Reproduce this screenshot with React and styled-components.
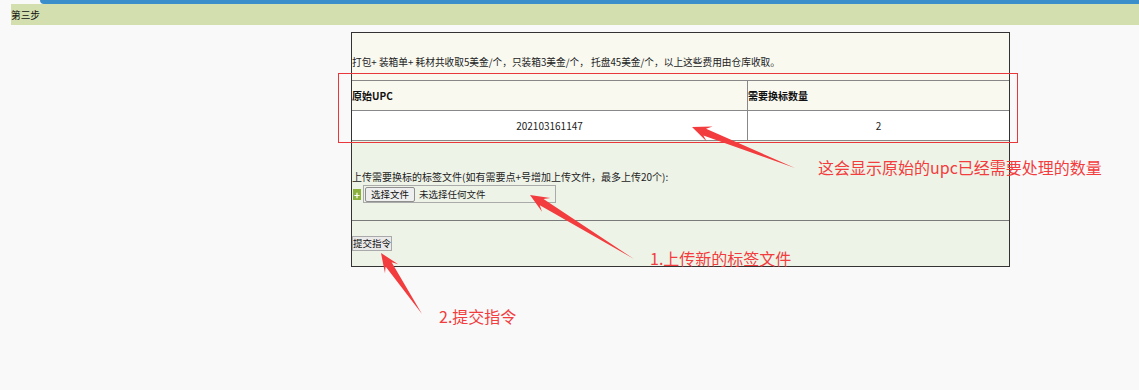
import React from "react";
import styled, { createGlobalStyle } from "styled-components";

const Global = createGlobalStyle`
  html, body { margin: 0; padding: 0; background: #f9f9f9; }
  body {
    font-family: "Noto Sans CJK SC", "Noto Sans", sans-serif;
    font-size: 10px;
    color: #222;
  }
`;

const Page = styled.div`
  position: relative;
  width: 1139px;
  height: 390px;
  overflow: hidden;
  background: #f9f9f9;
`;

const BlueBar = styled.div`
  height: 4px;
  margin-left: 40px;
  background: #3a8fcb;
  border-bottom-left-radius: 5px;
`;

const StepBar = styled.div`
  height: 21px;
  margin-left: 11px;
  background: #d3dfae;
  display: flex;
  align-items: center;
  line-height: 12px;
  font-size: 9.7px;
  color: #111;
`;

const Panel = styled.div`
  margin: 7px 0 0 351px;
  width: 657px;
  border: 1px solid #333;
`;

const InfoSection = styled.div`
  background: #f9f9f0;
  padding-top: 23px;
`;

const Notice = styled.div`
  line-height: 12px;
  height: 12px;
  margin-bottom: 12px;
  font-size: 9.7px;
  white-space: nowrap;
`;

const UpcTable = styled.table`
  width: 100%;
  border-collapse: collapse;
  border-spacing: 0;
`;

const HeadCell = styled.th`
  height: 29px;
  padding: 0;
  text-align: left;
  font-weight: bold;
  border-top: 1px solid #888;
  border-bottom: 1px solid #888;
  border-left: ${(p) => (p.$divider ? "1px solid #888" : "0")};
  width: ${(p) => p.$w};
  color: #111;
`;

const BodyRow = styled.tr`
  background: #fff;
`;

const BodyCell = styled.td`
  height: 29px;
  padding: 0;
  text-align: center;
  border-bottom: 1px solid #888;
  border-left: ${(p) => (p.$divider ? "1px solid #888" : "0")};
  color: #222;
`;

const UploadSection = styled.div`
  background: #eef3e8;
  padding: 30px 0 17px;
  border-bottom: 1px solid #7a7a7a;
`;

const UploadLabel = styled.div`
  line-height: 12px;
  height: 12px;
  white-space: nowrap;
`;

const FileRow = styled.div`
  margin-top: 2px;
  display: flex;
  align-items: center;
  gap: 2px;
`;

const AddButton = styled.span`
  width: 8px;
  height: 11px;
  margin-left: 1px;
  background: #8cb03c;
  color: #fff;
  font-weight: bold;
  font-size: 10px;
  line-height: 11px;
  display: flex;
  align-items: center;
  justify-content: center;
`;

const FileBox = styled.label`
  width: 190px;
  height: 16px;
  border: 1px solid #aaa;
  display: flex;
  align-items: center;
  gap: 4px;
  padding-left: 1px;
`;

const ChooseButton = styled.span`
  height: 13px;
  width: 48px;
  border: 1px solid #8f8f8f;
  border-radius: 2px;
  background: #efefef;
  display: flex;
  align-items: center;
  justify-content: center;
  font-size: 9.5px;
  color: #111;
`;

const FileName = styled.span`
  font-size: 9.5px;
  color: #222;
`;

const SubmitSection = styled.div`
  background: #eef3e8;
  padding: 15px 0 15px;
`;

const SubmitButton = styled.button`
  display: block;
  height: 15px;
  padding: 0;
  margin: 0;
  border: 1px solid #a9a9a9;
  background: #eaeaea;
  font: inherit;
  font-size: 9.5px;
  color: #111;
  line-height: 13px;
`;

const Overlay = styled.svg`
  position: absolute;
  left: 0;
  top: 0;
  pointer-events: none;
`;

const HighlightBox = styled.div`
  position: absolute;
  left: 338px;
  top: 73px;
  width: 678px;
  height: 68px;
  border: 1px solid #e8383c;
  pointer-events: none;
`;

const Callout = styled.div`
  position: absolute;
  left: ${(p) => p.$x}px;
  top: ${(p) => p.$y}px;
  font-size: 16px;
  line-height: 20px;
  color: #f23c3e;
  white-space: nowrap;
`;

function arrowPoints(tail, tip, headLen, headW, neckW) {
  const dx = tip[0] - tail[0];
  const dy = tip[1] - tail[1];
  const len = Math.hypot(dx, dy);
  const ux = dx / len;
  const uy = dy / len;
  const nx = -uy;
  const ny = ux;
  const bx = tip[0] - ux * headLen;
  const by = tip[1] - uy * headLen;
  const kx = tip[0] - ux * headLen * 0.72;
  const ky = tip[1] - uy * headLen * 0.72;
  const pts = [
    [tail[0], tail[1]],
    [kx + nx * neckW, ky + ny * neckW],
    [bx + nx * headW, by + ny * headW],
    [tip[0], tip[1]],
    [bx - nx * headW, by - ny * headW],
    [kx - nx * neckW, ky - ny * neckW],
  ];
  return pts.map((p) => `${p[0].toFixed(1)},${p[1].toFixed(1)}`).join(" ");
}

const arrows = [
  { tail: [795, 168], tip: [692, 127] },
  { tail: [634, 259], tip: [530, 195] },
  { tail: [422, 314], tip: [381, 253] },
];

export default function App() {
  return (
    <>
      <Global />
      <Page>
        <BlueBar />
        <StepBar>第三步</StepBar>
        <Panel>
          <InfoSection>
            <Notice>
              打包+ 装箱单+ 耗材共收取5美金/个，只装箱3美金/个， 托盘45美金/个，以上这些费用由仓库收取。
            </Notice>
            <UpcTable>
              <thead>
                <tr>
                  <HeadCell $w="395px">原始UPC</HeadCell>
                  <HeadCell $divider>需要换标数量</HeadCell>
                </tr>
              </thead>
              <tbody>
                <BodyRow>
                  <BodyCell>202103161147</BodyCell>
                  <BodyCell $divider>2</BodyCell>
                </BodyRow>
              </tbody>
            </UpcTable>
          </InfoSection>
          <UploadSection>
            <UploadLabel>
              上传需要换标的标签文件(如有需要点+号增加上传文件，最多上传20个):
            </UploadLabel>
            <FileRow>
              <AddButton>+</AddButton>
              <FileBox>
                <ChooseButton>选择文件</ChooseButton>
                <FileName>未选择任何文件</FileName>
              </FileBox>
            </FileRow>
          </UploadSection>
          <SubmitSection>
            <SubmitButton type="button">提交指令</SubmitButton>
          </SubmitSection>
        </Panel>

        <HighlightBox />
        <Overlay width="1139" height="390" viewBox="0 0 1139 390">
          {arrows.map((a, i) => (
            <polygon
              key={i}
              points={arrowPoints(a.tail, a.tip, 19, 8, 3.6)}
              fill="#f23c3e"
            />
          ))}
        </Overlay>
        <Callout $x={818} $y={157}>这会显示原始的upc已经需要处理的数量</Callout>
        <Callout $x={650} $y={248}>1.上传新的标签文件</Callout>
        <Callout $x={439} $y={306}>2.提交指令</Callout>
      </Page>
    </>
  );
}
